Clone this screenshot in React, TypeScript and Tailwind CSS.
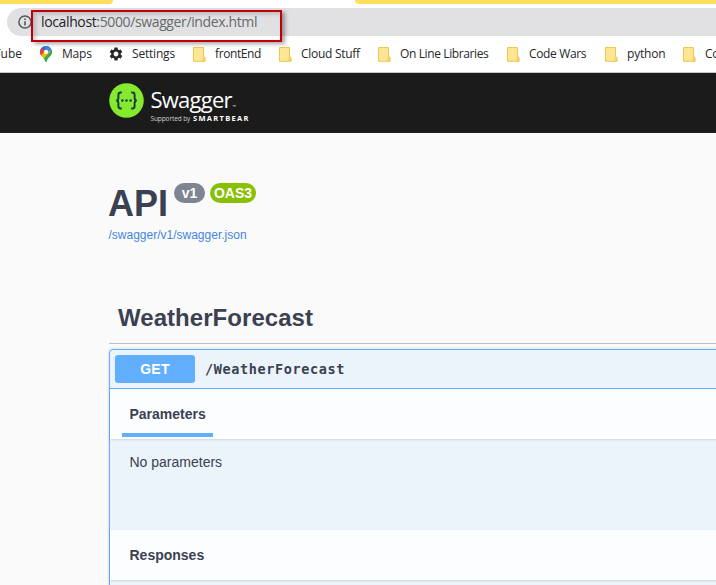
import React from "react";
import { MdSettings } from "react-icons/md";

function FolderIcon() {
  return (
    <svg width="13" height="15" viewBox="0 0 13 15" className="shrink-0">
      <path d="M.5.5h10v9.3q1.5 0 1.5 1.2v3.3H.5z" fill="#ffe694" stroke="#ecc94c" />
      <path d="M10 14V10.8q0-.7.9-.7t.8.7V14z" fill="#ffe48c" stroke="#e9c24a" strokeWidth=".7" />
    </svg>
  );
}

function MapsIcon() {
  return (
    <svg width="12" height="16" viewBox="0 0 12 16" className="shrink-0">
      <defs>
        <clipPath id="pin">
          <path d="M6 0a6 6 0 0 0-6 6c0 4 4.6 5 5.2 9.3q.8 1.2 1.6 0C7.4 11 12 10 12 6a6 6 0 0 0-6-6z" />
        </clipPath>
      </defs>
      <g clipPath="url(#pin)">
        <path d="M0 0h12v16H0z" fill="#34a853" />
        <path d="M0 9.8 12-3H0z" fill="#1a73e8" />
        <path d="M-1 4.8 1.4 1.8 5.6 5 1 10.2z" fill="#ea4335" />
        <path d="M.6 10 10.8-1 12 4 3.6 13z" fill="#fbbc04" />
        <path d="M4 0h8v4L8 6z" fill="#4285f4" />
        <path d="M12 3.4 3.2 13.5 6.5 16 14 9z" fill="#34a853" />
      </g>
      <circle cx="6" cy="5.9" r="2.1" fill="#fff" />
    </svg>
  );
}

function Bookmark({ width, label, labelClass, icon }: { width: string; label: string; labelClass: string; icon?: React.ReactNode }) {
  return (
    <div className={`flex h-full shrink-0 items-center ${width}`}>
      {icon ?? <FolderIcon />}
      <span className={`whitespace-nowrap ${labelClass}`}>{label}</span>
    </div>
  );
}

function Browser() {
  return (
    <div className="relative h-[73px] overflow-hidden border-b border-[#c4c5c8] bg-white font-['Open_Sans',sans-serif]">
      <div className="flex h-2 items-start justify-between">
        <div className="h-1 w-[113px] rounded-br-[5px] bg-[#ffde5c]" />
        <div className="h-1 w-[361px] rounded-bl-[5px] bg-[#ffde5c]" />
      </div>
      <div className="ml-[7px] flex h-7 items-center rounded-l-full bg-[#e1e1e3] pl-[11px]">
        <svg width="14" height="14" viewBox="0 0 14 14" className="shrink-0">
          <circle cx="7" cy="7" r="6.1" fill="none" stroke="#55585c" strokeWidth="1.5" />
          <path d="M7 6.2v4.3M7 3.4v1.5" stroke="#55585c" strokeWidth="1.6" />
        </svg>
        <span className="ml-[9px] whitespace-nowrap text-[14px] leading-7 tracking-[-0.37px] text-[#66696d]">
          <span className="text-[#222427]">localhost</span>:5000/swagger/index.html
        </span>
      </div>
      <div className="flex h-9 items-center overflow-hidden text-[12px] text-[#25272a]">
        <span className="w-10 shrink-0 -indent-[6px] whitespace-nowrap">Tube</span>
        <Bookmark width="w-[69px]" label="Maps" labelClass="ml-[10px] tracking-[-0.2px]" icon={<MapsIcon />} />
        <Bookmark width="w-[84px]" label="Settings" labelClass="ml-2 tracking-[-0.2px]" icon={<MdSettings className="-ml-px size-4 shrink-0" />} />
        <Bookmark width="w-[86px]" label="frontEnd" labelClass="ml-[9px] tracking-[-0.4px]" />
        <Bookmark width="w-[99px]" label="Cloud Stuff" labelClass="ml-[9px] tracking-[-0.28px]" />
        <Bookmark width="w-[129px]" label="On Line Libraries" labelClass="ml-[9px] tracking-[-0.38px]" />
        <Bookmark width="w-[98px]" label="Code Wars" labelClass="ml-[9px] tracking-[-0.35px]" />
        <Bookmark width="w-[78px]" label="python" labelClass="ml-[9px] tracking-[-0.2px]" />
        <Bookmark width="w-[86px]" label="Courses" labelClass="ml-[9px] tracking-[-0.2px]" />
      </div>
      <div className="absolute left-[31px] top-[10px] h-8 w-[251px] border-2 border-[#c00004] shadow-[3px_2px_4px_rgba(0,0,0,0.35),inset_3px_2px_4px_rgba(0,0,0,0.18)]" />
    </div>
  );
}

function Topbar() {
  return (
    <header className="flex h-[60px] bg-[#1b1b1b] pl-[109px] pt-[10px] font-['Open_Sans',sans-serif] text-white">
      <svg width="35" height="35" viewBox="0 0 35 35" className="shrink-0">
        <circle cx="17.5" cy="17.5" r="17.3" fill="#85ea2d" />
        <path d="M12.8 9.5h-1.2q-2.2 0-2.2 2.2v3.1q0 2.5-2.1 2.7 2.1.2 2.1 2.7v3.1q0 2.2 2.2 2.2h1.2M22.2 9.5h1.2q2.2 0 2.2 2.2v3.1q0 2.5 2.1 2.7-2.1.2-2.1 2.7v3.1q0 2.2-2.2 2.2h-1.2" fill="none" stroke="#173647" strokeWidth="1.9" />
        <circle cx="13.4" cy="17.5" r="1.2" fill="#173647" />
        <circle cx="17.5" cy="17.5" r="1.2" fill="#173647" />
        <circle cx="21.6" cy="17.5" r="1.2" fill="#173647" />
      </svg>
      <div className="ml-[6.5px]">
        <div className="flex h-[31px] items-baseline whitespace-nowrap text-[22px] leading-[33px] tracking-[-0.75px]">
          Swagger<span className="ml-px text-[4px] tracking-normal">™</span>
        </div>
        <div className="flex items-baseline whitespace-nowrap leading-[9px]">
          <span className="w-[42.5px] text-[6.5px] tracking-[-0.1px] text-[#d0d0d0]">Supported by</span>
          <span className="text-[7.5px] font-bold tracking-[1.3px]">SMARTBEAR</span>
        </div>
      </div>
    </header>
  );
}

function SectionHeader({ title, tab }: { title: string; tab?: boolean }) {
  return (
    <div className="relative z-10 flex h-[50px] bg-[#fbfdff] pl-3 shadow-[0_1px_2px_rgba(0,0,0,0.12)]">
      <h4 className={`flex h-12 w-[91px] items-center whitespace-nowrap pl-[7.5px] text-[14px] font-bold ${tab ? "border-b-4 border-[#61affe] pt-[6px]" : "pt-[2px]"}`}>{title}</h4>
    </div>
  );
}

export default function App() {
  return (
    <div className="h-[585px] w-[716px] overflow-hidden bg-[#fafafa] font-['Liberation_Sans',Arial,sans-serif] text-[#3b4151]">
      <Browser />
      <Topbar />
      <main className="pl-[109px]">
        <div className="flex h-[93px] items-start pt-[50px]">
          <h2 className="-ml-px w-[66px] pt-px text-[36px] font-bold leading-10">API</h2>
          <span className="flex h-5 w-[31px] items-center justify-center rounded-full bg-[#7d8492] text-[14px] font-bold text-white">v1</span>
          <span className="ml-[5px] flex h-5 w-[46px] items-center justify-center rounded-full bg-[#89bf04] text-[14px] font-bold text-white">OAS3</span>
        </div>
        <a className="-ml-[0.5px] block h-[69px] pt-px text-[12px] leading-4 text-[#4585e0]">/swagger/v1/swagger.json</a>
        <h3 className="h-[49px] border-b border-[#bfc0c3] pl-[9px] pt-[7px] text-[24px] font-bold leading-8 tracking-[0.05px]">WeatherForecast</h3>
        <section className="mt-[5px] h-[260px] w-[620px] rounded border border-[#61affe] bg-[#ebf3fb] shadow-[0_0_3px_rgba(0,0,0,0.19)]">
          <div className="flex h-[39px] items-center border-b border-[#61affe] pl-[5px]">
            <span className="flex h-7 w-20 items-center justify-center rounded-[3px] bg-[#61affe] text-[14px] font-bold tracking-[0.3px] text-white">GET</span>
            <span className="ml-[10px] font-['DejaVu_Sans_Mono',monospace] text-[13.5px] font-bold tracking-[0.63px]">/WeatherForecast</span>
          </div>
          <SectionHeader title="Parameters" tab />
          <p className="h-[91px] pl-[19.5px] pt-[13px] text-[14px] leading-5">No parameters</p>
          <SectionHeader title="Responses" />
        </section>
      </main>
    </div>
  );
}
